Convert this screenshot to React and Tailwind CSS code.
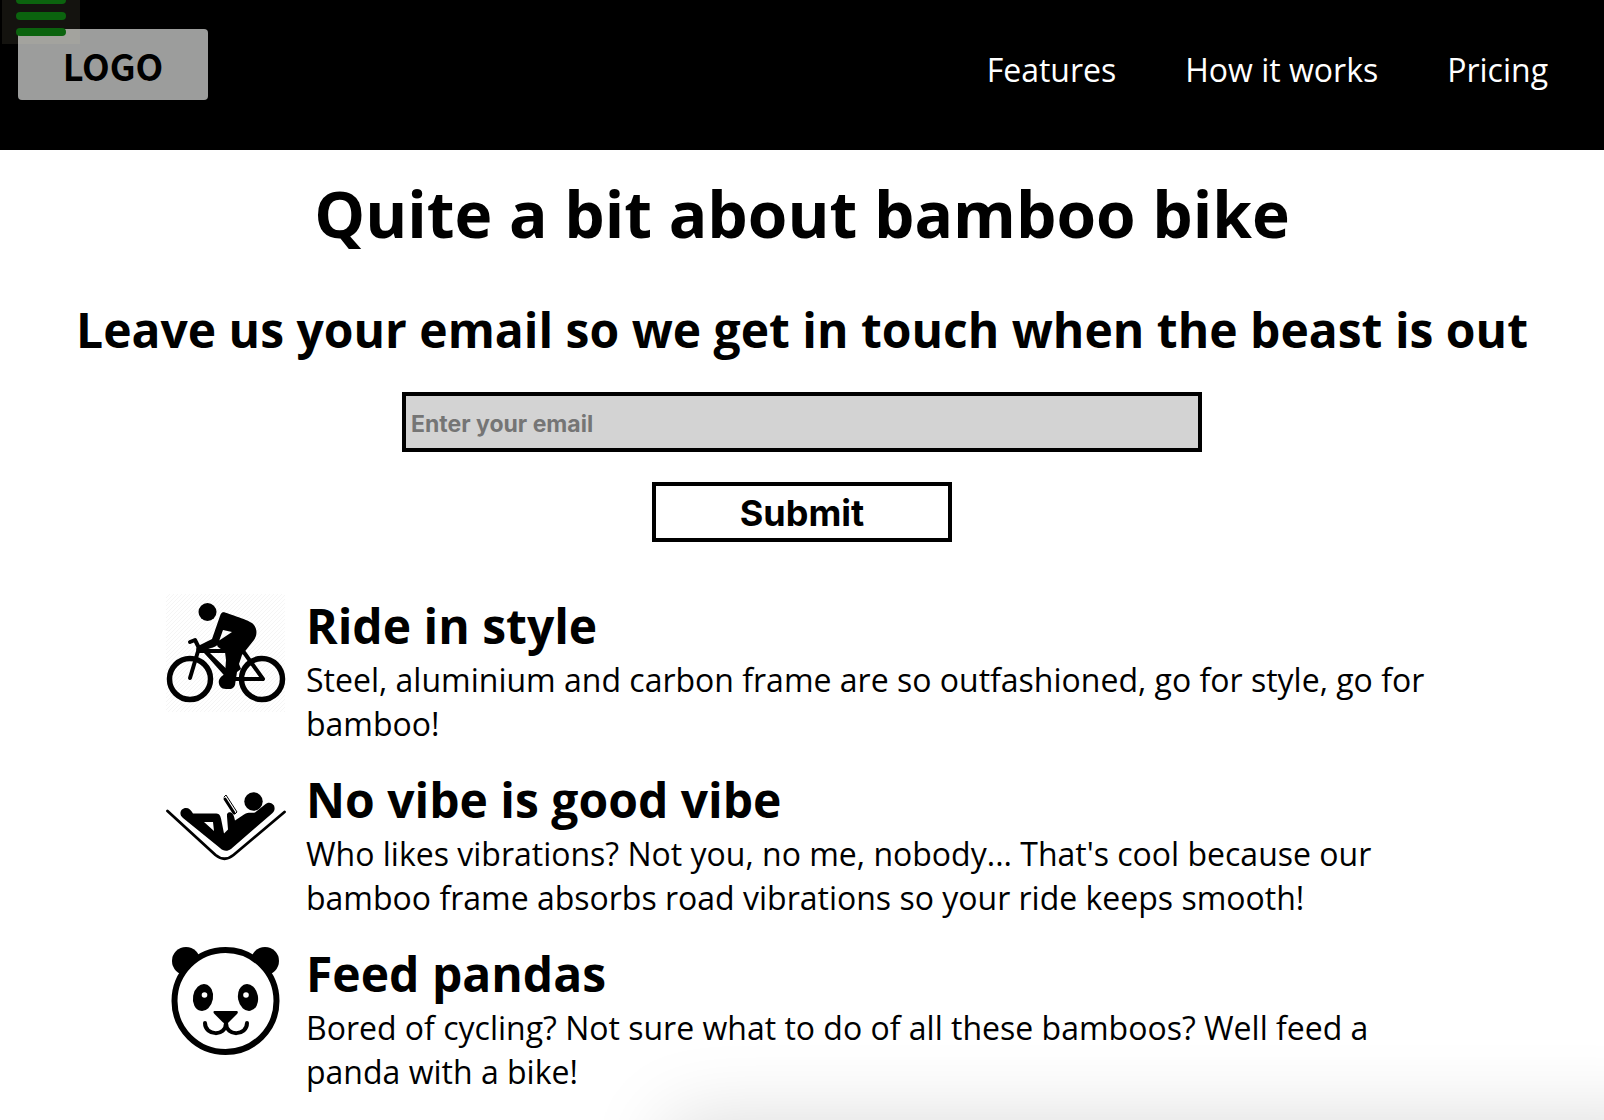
import React from "react";

function BikeIcon() {
  return (
    <svg viewBox="0 0 120 120" className="size-[120px] shrink-0" aria-hidden="true" fill="none" stroke="#000" strokeLinecap="round" strokeLinejoin="round">
      <defs>
        <pattern id="hatch" width="4" height="4" patternUnits="userSpaceOnUse">
          <path d="M0 4 4 0" stroke="#f5f5f5" strokeWidth="1" />
        </pattern>
      </defs>
      <rect width="119" height="118" fill="url(#hatch)" stroke="none" />
      <circle cx="24" cy="85" r="20.500" strokeWidth="5.500" />
      <circle cx="96" cy="85" r="20.500" strokeWidth="5.500" />
      <circle cx="41.500" cy="18" r="9" fill="#000" stroke="none" />
      <path d="M24 84 33 54l-4-8-5 2" strokeWidth="4" />
      <path d="M33 57h44l20 28H68L40 58" strokeWidth="4" />
      <path d="m40 58 24 27" strokeWidth="4" />
      <path d="M57 18c1 0 25 8 29 11 5 4 6 11 2 17L76 61l-3 9 2 5-4 3-2 13c-2 5-6 4-9 4-6 0-8-5-7-9 1-3 4-5 6-6l1-14-1-8-7-5c-2-2 0-6 2-7l12-8-9-2-5 14c-2 3-4 3-7 4l-11 4c-4 1-5-4-2-6l14-7 8-23c1-3 2-4 4-4Z" fill="#000" stroke="none" />
    </svg>
  );
}

function HammockIcon() {
  return (
    <svg viewBox="0 -16 120 120" className="size-[120px] shrink-0" aria-hidden="true" fill="none" stroke="#000" strokeLinecap="round" strokeLinejoin="round">
      <path d="m1.500 27 48 44c6 5 12 5 18 0l51-43" strokeWidth="2.800" />
      <circle cx="87.500" cy="17.500" r="9.200" fill="#000" stroke="none" />
      <path d="M20 24c3 0 5 2 7 5.500l22 0c4 0 5 1 6 5l3 15 4-4-1-13c0-3 1-5 4-4 2 1 3 3 4 8l9-6c5-3 8-1 11-2l10-8c3-3 7-2 9 1 1 3 1 5-2 8L65 65c-4 3-8 2-11-1L17 34c-5-4-2-10 3-10ZM38 38l10 9-1-9Z" fill="#000" fillRule="evenodd" stroke="none" />
      <path d="m59 15 9 14" strokeWidth="3" />
      <path d="m58 13 2-2 11 17-2 2" strokeWidth="1" />
      <path d="m63 31 3 5" strokeWidth="4" />
    </svg>
  );
}

function PandaIcon() {
  return (
    <svg viewBox="0 0 120 120" className="size-[120px] shrink-0" aria-hidden="true">
      <circle cx="20" cy="19" r="14" />
      <circle cx="99" cy="19" r="14" />
      <circle cx="59.500" cy="59" r="51" fill="#fff" stroke="#000" strokeWidth="6" />
      <ellipse cx="37" cy="55.500" rx="10" ry="13.500" transform="rotate(10 37 55.500)" />
      <ellipse cx="82" cy="55.500" rx="10" ry="13.500" transform="rotate(-10 82 55.500)" />
      <circle cx="38.500" cy="53" r="2.800" fill="#fff" />
      <circle cx="80" cy="53" r="2.800" fill="#fff" />
      <path d="M49 69h21c2 0 2.500 1.500 1 3l-8 8c-2 2-4.500 2-6.500 0l-8-8c-1.500-1.500-1.500-3 .5-3Z" />
      <path d="M39 81c0 13 21 14 21 0 0 14 21 13 21 0" fill="none" stroke="#000" strokeWidth="4" strokeLinecap="round" />
    </svg>
  );
}

const features = [
  { Icon: BikeIcon, title: "Ride in style", text: "Steel, aluminium and carbon frame are so outfashioned, go for style, go for bamboo!" },
  { Icon: HammockIcon, title: "No vibe is good vibe", text: "Who likes vibrations? Not you, no me, nobody... That's cool because our bamboo frame absorbs road vibrations so your ride keeps smooth!" },
  { Icon: PandaIcon, title: "Feed pandas", text: "Bored of cycling? Not sure what to do of all these bamboos? Well feed a panda with a bike!" },
];

export default function App() {
  return (
    <div className="bg-white font-['Open_Sans',sans-serif] text-black">
      <header className="flex h-[150px] items-start justify-between bg-black pr-14 pl-[18px]">
        <a href="#home" className="mt-[29px] flex h-[71px] w-[190px] items-center justify-center rounded bg-[#9c9d9c] font-['Noto_Sans_CJK_SC',sans-serif] text-[36px] leading-none font-bold">
          LOGO
        </a>
        <nav className="mt-12 flex gap-[69px] text-[32px] leading-[44px] text-white">
          <a href="#features">Features</a>
          <a href="#how">How it works</a>
          <a href="#pricing">Pricing</a>
        </nav>
      </header>

      <button type="button" aria-label="Menu" className="fixed top-0 left-[2px] flex h-11 w-[78px] flex-col justify-end gap-2 bg-[rgba(255,245,190,0.08)] px-[14px] pb-2">
        <span className="h-2 w-[50px] shrink-0 rounded-full bg-[#0b630e]" />
        <span className="h-2 w-[50px] shrink-0 rounded-full bg-[#0b630e]" />
        <span className="h-2 w-[50px] shrink-0 rounded-full bg-[#0b630e]" />
      </button>

      <main>
        <h1 className="pt-5 text-center text-[64px] leading-[88px] font-bold">Quite a bit about bamboo bike</h1>
        <form className="mt-10 flex flex-col items-center" onSubmit={(e) => e.preventDefault()}>
          <h2 className="text-center text-[48px] leading-[64px] font-bold">
            <label htmlFor="email">Leave us your email so we get in touch when the beast is out</label>
          </h2>
          <input id="email" type="email" placeholder="Enter your email" className="mt-[30px] h-[60px] w-[800px] max-w-full border-4 border-black bg-[#d3d3d3] px-[5px] pt-1 font-['Inter',sans-serif] text-[23px] font-bold placeholder:text-[#757575]" />
          <button type="submit" className="mt-[30px] h-[60px] w-[300px] border-4 border-black bg-white pt-[2px] font-['Inter',sans-serif] text-[36px] leading-none font-bold">
            Submit
          </button>
        </form>

        <section id="features" className="mt-[52px] flex flex-col gap-[22px] px-[166px] pb-5">
          {features.map(({ Icon, title, text }) => (
            <article key={title} className="flex gap-5">
              <Icon />
              <div>
                <h2 className="text-[48px] leading-[64px] font-bold">{title}</h2>
                <p className="text-[32px] leading-[44px]">{text}</p>
              </div>
            </article>
          ))}
        </section>
      </main>

      <div className="pointer-events-none fixed top-full -right-20 left-[668px] h-40 shadow-[0_0_80px_rgba(0,0,0,0.15)]" />
    </div>
  );
}
